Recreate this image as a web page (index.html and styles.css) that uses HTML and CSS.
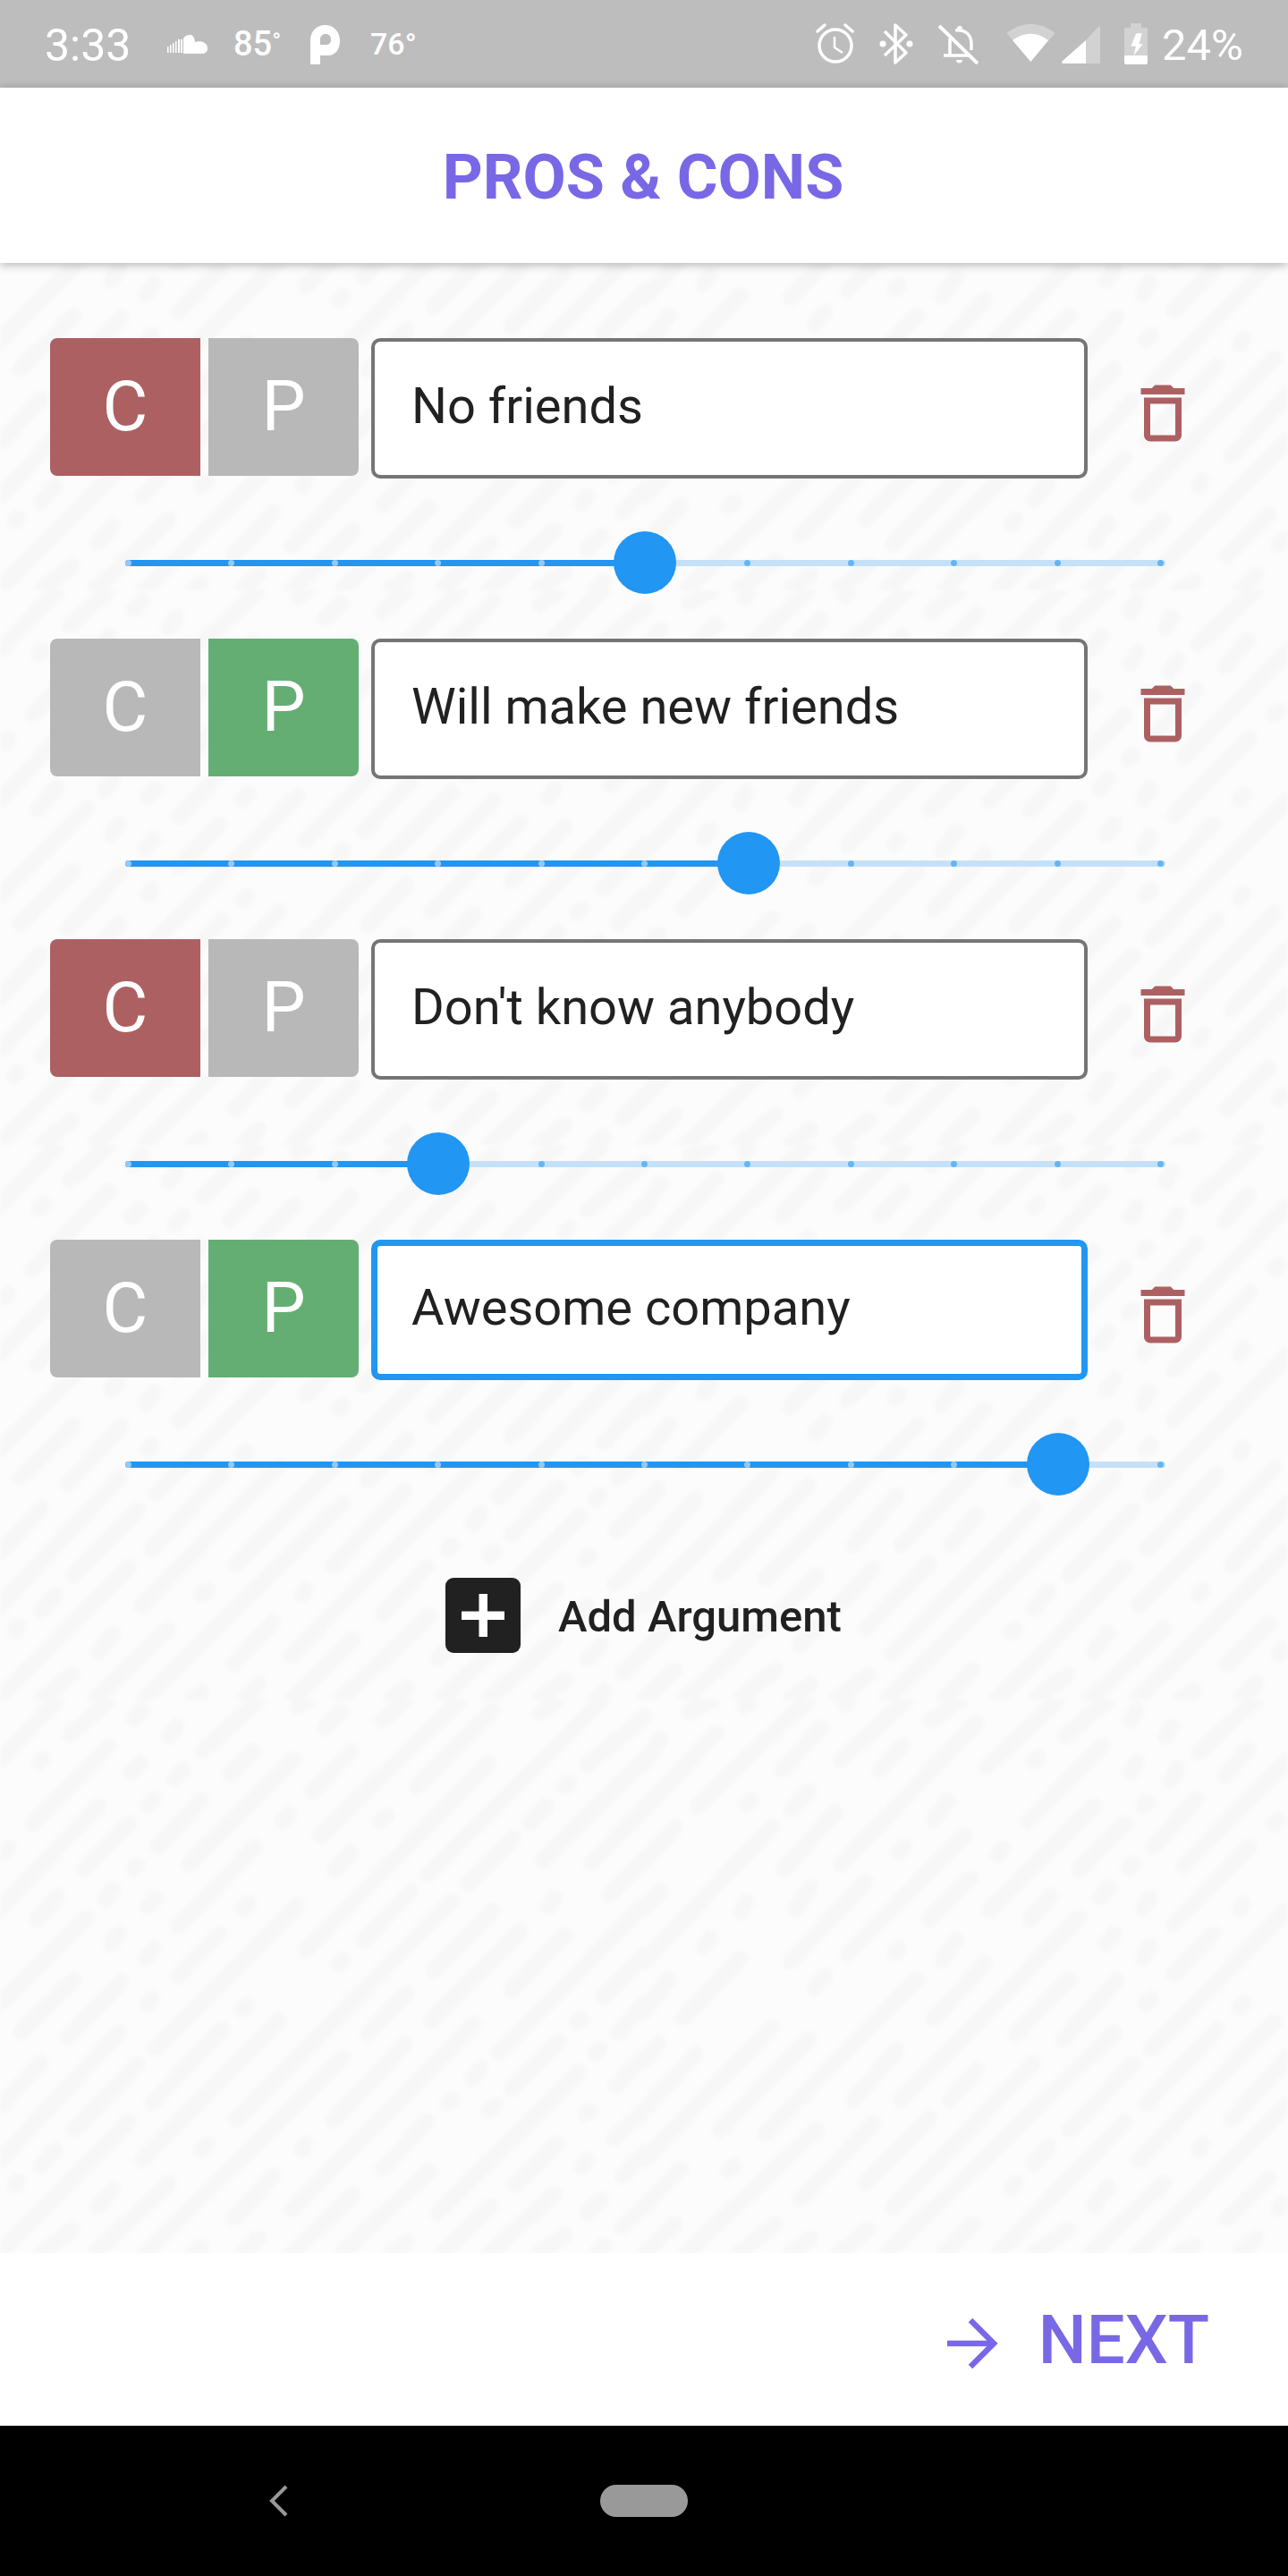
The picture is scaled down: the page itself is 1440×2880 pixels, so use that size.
FILE: index.html
```html
<!DOCTYPE html>
<html>

<head>
    <title>Pros &amp; Cons</title>
    <meta name="viewport" content="width=device-width, initial-scale=1.0">
    <link rel="stylesheet" href="styles.css">
</head>

<body>
    <div class="screen">
        <div class="statusbar">
            <span class="clock">3:33</span>
            <svg class="ic-cloud" width="45" height="46" viewBox="0 0 45 46" fill="#fff">
                <path d="M0 26h1.500v7H0zM3 24h1.500v9H3zM6 22h1.500v11H6zM9 20h1.500v13H9zM12 18h2v15h-2zM15 18h2v15h-2z" />
                <path d="M18 34V17C20 13 24 13 27 13C30 15 31 19 31 21C37 19 45 21 45 28C45 32 42 34 39 34Z" />
            </svg>
            <span class="temp-high">85<span class="deg">°</span></span>
            <svg class="ic-p" width="33" height="46" viewBox="0 0 33 46" fill="#fff">
                <path fill-rule="evenodd" d="M0 46V19C0 9 7 2 16.500 2C26 2 33 9 33 20C33 29 28 36 20 36H11V46ZM11 24H17C21 24 23 22 23 18C23 14.500 21 12 17 12C13 12 11 14.500 11 18Z" />
            </svg>
            <span class="temp-low">76°</span>

            <div class="status-right">
                <svg class="ic-alarm" width="43" height="46" viewBox="0 0 43 46" fill="none" stroke="#fff" stroke-width="3.500">
                    <circle cx="22" cy="25" r="18" />
                    <path d="M2 9L10 2M33 2L41 9" stroke-linecap="round" />
                    <path d="M21 15V27L30 33" stroke-width="2.500" />
                </svg>
                <svg class="ic-bt" width="38" height="46" viewBox="0 0 38 46" fill="none" stroke="#fff" stroke-width="3.500">
                    <path d="M6 9L30 33L18 44V2L30 13L6 36" stroke-linejoin="round" />
                    <circle cx="4" cy="23" r="3.500" fill="#fff" stroke="none" />
                    <circle cx="34" cy="23" r="3.500" fill="#fff" stroke="none" />
                </svg>
                <svg class="ic-bell" width="45" height="46" viewBox="0 0 45 46" fill="none" stroke="#fff" stroke-width="3.500">
                    <path d="M1 3L44 45" stroke-width="4" />
                    <path d="M19 8C30 6 37 13 37 23V30M13 17V36M6 36H35" />
                    <path d="M20 41h7a3.500 3.500 0 0 1-7 0z" fill="#fff" stroke="none" />
                    <path d="M21 6a3 3 0 0 1 6 0z" fill="#fff" stroke="none" />
                </svg>
                <svg class="ic-wifi" width="55" height="46" viewBox="0 0 55 46">
                    <path d="M0.500 11Q27.300 -9.600 54.500 11L27.300 43Z" fill="#fff" opacity="0.330" />
                    <path d="M7 19Q27.300 4.400 47 19L27.300 43Z" fill="#fff" />
                </svg>
                <svg class="ic-signal" width="43" height="46" viewBox="0 0 43 46">
                    <path d="M27 19L41 4Q43 2 43 5V45H27Z" fill="#fff" opacity="0.330" />
                    <path d="M27 19V45H2Q-1 45 1 42Z" fill="#fff" />
                </svg>
                <svg class="ic-battery" width="26" height="46" viewBox="0 0 26 46">
                    <path d="M7 0H19V5H25Q26 5 26 6V36H0V6Q0 5 1 5H7Z" fill="#fff" opacity="0.330" />
                    <path d="M0 36H26V44Q26 46 24 46H2Q0 46 0 44Z" fill="#fff" />
                    <path d="M13.300 11.300H19.700L16.500 23.300H20.700L10.600 36L12.900 25.700H7.300Z" fill="#fff" />
                </svg>
                <span class="battery-pct">24%</span>
            </div>
        </div>

        <div class="topbar">PROS &amp; CONS</div>

        <div class="main">
            <svg class="texture" width="1440" height="2225">
                <defs>
                    <filter id="soft">
                        <feGaussianBlur stdDeviation="2.400" />
                    </filter>
                    <pattern id="dashes" patternUnits="userSpaceOnUse" width="1440" height="620" patternTransform="translate(0 366)">
                        <g transform="scale(0.4592 0.3962)" fill="none" stroke="#f7f7f7" stroke-width="18" stroke-linecap="round">
                            <path vector-effect="non-scaling-stroke" d="M0 170L140 0M170 100L265 0M325 55L345 30M410 105L430 75M495 145L630 0M725 20L750 0M790 80L830 35M930 60L990 0M1015 245L1200 30M1315 40L1360 0M1430 185L1568 50M95 180L105 168M80 350L265 130M320 205L340 180M425 225L445 200M560 210L615 145M460 465L715 170M760 260L855 145M780 385L1120 0M1040 495L1467 0M745 705L1190 180M360 300L375 280M385 415L490 285M685 345L705 322M925 345L942 328M0 590L240 300M205 480L315 350M1290 350L1330 300M1375 246L1385 234M1320 455L1568 170M1440 460L1568 310M1140 520L1250 390M815 480L855 430M435 640L620 415M325 478L335 466M10 431L20 419M90 620L140 555M255 565L275 535M360 585L378 560M590 592L605 575M885 680L1000 540M1485 550L1568 450M1335 585L1350 560M0 860L210 615M270 690L290 660M355 730L375 700M435 780L535 660M380 985L725 580M825 746L835 734M1055 765L1200 595M1245 820L1375 665M575 1185L1100 570M895 945L990 830M1050 905L1265 655M1215 995L1568 580M1470 840L1568 720M50 940L180 790M165 955L295 795M360 860L370 845M590 876L600 864M0 1150L100 1025M0 1300L290 940M370 1140L540 930M345 1300L680 905M1405 911L1415 899M1505 940L1568 860M180 1215L335 1030M810 1190L985 975M1245 1100L1360 965M1450 1001L1460 989M1150 1070L1170 1040M1500 1090L1568 1010M1090 1141L1100 1129M1190 1160L1205 1145M710 1440L1155 915M1425 1170L1435 1160M1495 1240L1568 1160M0 1560L315 1190M100 1315L135 1270M35 1371L45 1359M240 1430L275 1380M490 1270L505 1255M735 1270L745 1255M930 1325L1040 1190M1255 1370L1355 1255M1415 1320L1430 1300M1515 1345L1568 1280M350 1565L835 1010M230 1565L410 1365M570 1465L665 1345M710 1565L860 1395M830 1565L1045 1330M1065 1450L1410 1050M1430 1450L1465 1410M1515 1490L1568 1430M100 1565L175 1495M590 1565L630 1520M1075 1565L1195 1430M1190 1565L1350 1395M950 1565L990 1530M1310 1565L1375 1510M470 1565L490 1545M1450 1565L1470 1540" />
                            <path vector-effect="non-scaling-stroke" transform="translate(1568 0)" d="M0 180L40 110M0 310L175 95M110 35L165 0M245 21L255 9M130 300L400 0M335 200L430 80M490 16L500 4M480 170L640 0M700 60L770 0M575 200L630 130M480 465L810 65M835 190L1010 0M1025 105L1130 0M1185 60L1200 30M1270 105L1285 75M1350 150L1490 0M950 176L960 164M935 345L1115 130M1185 205L1200 175M1280 230L1300 195M1415 215L1470 140M250 296L260 284M360 310L400 260M705 340L740 285M1215 301L1225 289M1240 415L1345 280M1315 470L1568 170M0 460L75 360M0 740L310 360M340 480L465 320M620 430L635 415M495 720L780 385M860 440L875 420M840 595L1095 300M1060 480L1170 350M1180 476L1190 464M1535 351L1545 339M0 590L40 540M235 600L250 570M370 590L405 530M355 740L540 515M695 620L795 505M940 620L990 555M1110 560L1130 530M1215 590L1230 560M1290 635L1475 415M1450 590L1460 575M1235 985L1568 590M145 700L160 675M610 716L620 704M725 735L760 680M1125 690L1145 660M1215 730L1230 695M1290 775L1385 660M95 900L235 730M415 815L440 780M0 880L60 790M0 1020L35 970M705 900L830 745M625 1130L1060 615M295 1225L665 790M905 945L1035 790M1020 960L1150 795M1220 860L1235 845M1450 870L1460 855M0 1300L310 925M185 1215L400 960M0 1160L125 1000M510 1130L615 990M745 1130L810 1045M605 1435L950 1025M1035 1215L1190 1030M1225 1140L1395 930M1430 1185L1568 1010M1205 1300L1535 910M380 1410L560 1195M540 1365L695 1180M100 1565L420 1215M0 1430L90 1325M205 1330L220 1315M950 1310L985 1260M1350 1270L1360 1255M895 1376L905 1364M1095 1430L1130 1375M1420 1465L1520 1350M860 1565L1170 1190M1085 1565L1265 1365M590 1565L1145 940M1200 1565L1568 1140M0 1565L75 1480M230 1565L320 1480M355 1565L405 1520M470 1565L545 1495M730 1565L800 1480M950 1565L1030 1495M1300 1565L1340 1540M1450 1565L1490 1520M1545 1436L1555 1424" />
                        </g>
                    </pattern>
                </defs>
                <rect width="1440" height="2225" fill="url(#dashes)" filter="url(#soft)" />
            </svg>

            <div class="argument">
                <div class="arg-row">
                    <div class="toggle toggle-c con-on">C</div>
                    <div class="toggle toggle-p">P</div>
                    <div class="arg-input">No friends</div>
                    <svg class="trash" width="84" height="84" viewBox="0 0 24 24"><path d="M6 19c0 1.100.9 2 2 2h8c1.100 0 2-.9 2-2V7H6v12zM8 9h8v10H8V9zm7.500-5l-1-1h-5l-1 1H5v2h14V4z" /></svg>
                </div>
                <div class="slider" style="--v: 5">
                    <div class="slider-fill"></div>
                    <div class="slider-ticks">
                        <i class="on"></i><i class="on"></i><i class="on"></i><i class="on"></i><i class="on"></i><i class="on"></i><i></i><i></i><i></i><i></i><i></i>
                    </div>
                    <div class="slider-thumb"></div>
                </div>
            </div>

            <div class="argument">
                <div class="arg-row">
                    <div class="toggle toggle-c">C</div>
                    <div class="toggle toggle-p pro-on">P</div>
                    <div class="arg-input">Will make new friends</div>
                    <svg class="trash" width="84" height="84" viewBox="0 0 24 24"><path d="M6 19c0 1.100.9 2 2 2h8c1.100 0 2-.9 2-2V7H6v12zM8 9h8v10H8V9zm7.500-5l-1-1h-5l-1 1H5v2h14V4z" /></svg>
                </div>
                <div class="slider" style="--v: 6">
                    <div class="slider-fill"></div>
                    <div class="slider-ticks">
                        <i class="on"></i><i class="on"></i><i class="on"></i><i class="on"></i><i class="on"></i><i class="on"></i><i class="on"></i><i></i><i></i><i></i><i></i>
                    </div>
                    <div class="slider-thumb"></div>
                </div>
            </div>

            <div class="argument">
                <div class="arg-row">
                    <div class="toggle toggle-c con-on">C</div>
                    <div class="toggle toggle-p">P</div>
                    <div class="arg-input">Don't know anybody</div>
                    <svg class="trash" width="84" height="84" viewBox="0 0 24 24"><path d="M6 19c0 1.100.9 2 2 2h8c1.100 0 2-.9 2-2V7H6v12zM8 9h8v10H8V9zm7.500-5l-1-1h-5l-1 1H5v2h14V4z" /></svg>
                </div>
                <div class="slider" style="--v: 3">
                    <div class="slider-fill"></div>
                    <div class="slider-ticks">
                        <i class="on"></i><i class="on"></i><i class="on"></i><i class="on"></i><i></i><i></i><i></i><i></i><i></i><i></i><i></i>
                    </div>
                    <div class="slider-thumb"></div>
                </div>
            </div>

            <div class="argument">
                <div class="arg-row">
                    <div class="toggle toggle-c">C</div>
                    <div class="toggle toggle-p pro-on">P</div>
                    <div class="arg-input focused">Awesome company</div>
                    <svg class="trash" width="84" height="84" viewBox="0 0 24 24"><path d="M6 19c0 1.100.9 2 2 2h8c1.100 0 2-.9 2-2V7H6v12zM8 9h8v10H8V9zm7.500-5l-1-1h-5l-1 1H5v2h14V4z" /></svg>
                </div>
                <div class="slider" style="--v: 9">
                    <div class="slider-fill"></div>
                    <div class="slider-ticks">
                        <i class="on"></i><i class="on"></i><i class="on"></i><i class="on"></i><i class="on"></i><i class="on"></i><i class="on"></i><i class="on"></i><i class="on"></i><i class="on"></i><i></i>
                    </div>
                    <div class="slider-thumb"></div>
                </div>
            </div>

            <div class="add-row">
                <div class="add-box">
                    <svg width="48" height="48" viewBox="0 0 48 48"><path d="M19.500 0h9.500v19.500H48v9.500H29v19h-9.500V29H0v-9.500h19.500z" fill="#fff" /></svg>
                </div>
                <span class="add-label">Add Argument</span>
            </div>
        </div>

        <div class="footer">
            <svg class="next-arrow" width="58" height="58" viewBox="0 0 58 58" fill="none" stroke="#7868e6" stroke-width="6.500">
                <path d="M0 29H52" />
                <path d="M26 3L52 29L26 55" />
            </svg>
            <span class="next-label">NEXT</span>
        </div>

        <div class="navbar">
            <svg width="22" height="36" viewBox="0 0 22 36" fill="none" stroke="#999" stroke-width="4">
                <path d="M20 2L4 18L20 34" />
            </svg>
            <div class="nav-pill"></div>
        </div>
    </div>
</body>

</html>
```

FILE: styles.css
```css
body {
    margin: 0;
    font-family: Roboto, "Liberation Sans", sans-serif;
    color: #212121;
}

.screen {
    display: flex;
    flex-direction: column;
    width: 1440px;
    height: 2880px;
    overflow: hidden;
}

/* status bar */

.statusbar {
    display: flex;
    align-items: center;
    flex: none;
    height: 98px;
    padding: 0 50px;
    box-sizing: border-box;
    background-color: #bdbdbd;
    color: white;
}

.clock,
.battery-pct {
    font-size: 50px;
    line-height: 98px;
    padding-top: 3px;
}

.clock {
    width: 97px;
}

.ic-cloud {
    margin-left: 40px;
}

.temp-high {
    width: 52px;
    margin-left: 29px;
    font-size: 38px;
    font-weight: 500;
    white-space: nowrap;
}

.deg {
    font-size: 26px;
    vertical-align: 7px;
}

.ic-p {
    margin-left: 34px;
}

.temp-low {
    width: 51px;
    margin-left: 34px;
    font-size: 34px;
    font-weight: 500;
    white-space: nowrap;
}

.status-right {
    display: flex;
    align-items: center;
    margin-left: auto;
}

.ic-bt {
    margin-left: 28px;
}

.ic-bell {
    margin-left: 28px;
}

.ic-wifi {
    margin-left: 31px;
}

.ic-signal {
    margin-left: 7px;
}

.ic-battery {
    margin-left: 27px;
}

.battery-pct {
    margin-left: 16px;
    font-size: 49px;
}

/* header */

.topbar {
    position: relative;
    z-index: 2;
    flex: none;
    height: 196px;
    padding-right: 2px;
    background-color: white;
    box-shadow: 0 2px 10px rgba(0, 0, 0, 0.3);
    color: #7868e6;
    font-size: 70px;
    font-weight: 700;
    line-height: 200px;
    text-align: center;
}

/* list */

.main {
    position: relative;
    flex: 1;
    padding-top: 84px;
    background-color: #fcfcfc;
}

.texture {
    position: absolute;
    top: 0;
    left: 0;
}

.argument {
    position: relative;
    height: 336px;
}

.arg-row {
    display: flex;
    align-items: flex-start;
    padding-left: 56px;
}

.toggle {
    width: 168px;
    height: 154px;
    background-color: #b8b8b8;
    color: white;
    font-size: 78px;
    line-height: 153px;
    text-align: center;
}

.toggle-c {
    border-radius: 8px 0 0 8px;
}

.toggle-p {
    margin-left: 9px;
    border-radius: 0 8px 8px 0;
}

.con-on {
    background-color: #ad6062;
}

.pro-on {
    background-color: #64ae74;
}

.arg-input {
    width: 801px;
    height: 157px;
    margin-left: 14px;
    padding-left: 41px;
    box-sizing: border-box;
    border: 4px solid #757575;
    border-radius: 10px;
    background-color: white;
    font-size: 56px;
    line-height: 145px;
}

.arg-input.focused {
    padding-left: 38px;
    border: 7px solid #2196f3;
    line-height: 139px;
}

.trash {
    margin: 42px 0 0 42px;
    fill: #ad6062;
}

/* slider */

.slider {
    position: relative;
    width: 1163px;
    height: 7px;
    margin: 91px 0 0 140px;
    border-radius: 4px;
    background-color: #c5e1f8;
}

.slider-fill {
    width: calc(4px + var(--v) * 115.4px);
    height: 7px;
    border-radius: 4px 0 0 4px;
    background-color: #2196f3;
}

.slider-ticks {
    position: absolute;
    top: 0;
    left: 0;
    right: 2px;
    display: flex;
    justify-content: space-between;
}

.slider-ticks i {
    width: 7px;
    height: 7px;
    border-radius: 50%;
    background-color: #64b5f6;
}

.slider-ticks i.on {
    background-color: #93c9f8;
}

.slider-thumb {
    position: absolute;
    top: -32px;
    left: calc(3px + var(--v) * 115.6px - 35px);
    width: 70px;
    height: 70px;
    border-radius: 50%;
    background-color: #2196f3;
}

/* add */

.add-row {
    position: relative;
    display: flex;
    align-items: center;
    margin: 42px 0 0 498px;
}

.add-box {
    display: flex;
    align-items: center;
    justify-content: center;
    width: 84px;
    height: 84px;
    border-radius: 9px;
    background-color: #212121;
}

.add-label {
    margin-left: 42px;
    padding-top: 2px;
    font-size: 49px;
    font-weight: 500;
}

/* bottom */

.footer {
    position: relative;
    z-index: 2;
    display: flex;
    align-items: center;
    justify-content: flex-end;
    flex: none;
    height: 193px;
    padding-right: 88px;
    background-color: white;
}

.next-arrow {
    margin-top: 8px;
}

.next-label {
    margin-left: 44px;
    color: #7868e6;
    font-size: 76px;
    font-weight: 500;
}

.navbar {
    display: flex;
    align-items: center;
    flex: none;
    height: 168px;
    padding-left: 300px;
    background-color: black;
}

.nav-pill {
    width: 98px;
    height: 36px;
    margin-left: 349px;
    border-radius: 18px;
    background-color: #999;
}
```
